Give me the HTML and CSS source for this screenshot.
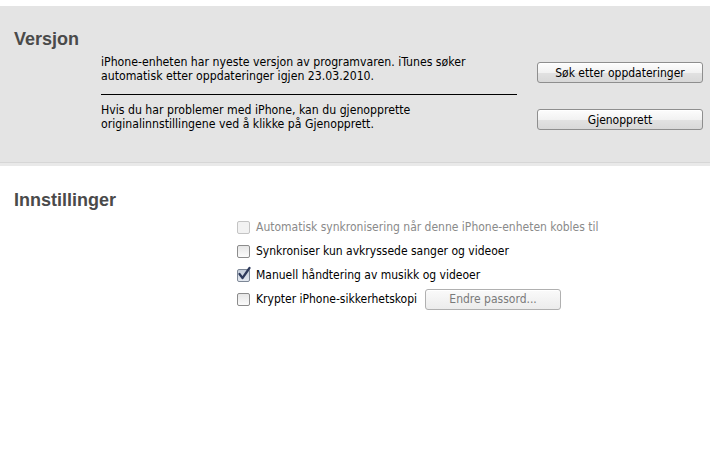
FILE: index.html
```html
<!DOCTYPE html>
<html lang="no">
<head>
    <meta charset="UTF-8">
    <title>iPhone - Sammendrag</title>
    <link rel="stylesheet" href="styles.css">
</head>
<body>
    <div class="panel">
        <h2 class="section-title">Versjon</h2>
        <div class="version-grid">
            <p class="info">iPhone-enheten har nyeste versjon av programvaren. iTunes søker automatisk etter oppdateringer igjen 23.03.2010.</p>
            <button class="btn btn-update">Søk etter oppdateringer</button>
            <hr class="divider">
            <p class="info">Hvis du har problemer med iPhone, kan du gjenopprette originalinnstillingene ved å klikke på Gjenopprett.</p>
            <button class="btn btn-restore">Gjenopprett</button>
        </div>
    </div>

    <div class="settings">
        <h2 class="section-title">Innstillinger</h2>
        <ul class="options">
            <li class="option disabled">
                <span class="check"></span>
                Automatisk synkronisering når denne iPhone-enheten kobles til
            </li>
            <li class="option">
                <span class="check"></span>
                Synkroniser kun avkryssede sanger og videoer
            </li>
            <li class="option">
                <span class="check checked">
                    <svg width="14" height="15" viewBox="0 0 14 15"><path d="M2.5 8 L5.5 12 L12.5 2" fill="none" stroke="#2e3a5c" stroke-width="2.2" stroke-linecap="round" stroke-linejoin="round"/></svg>
                </span>
                Manuell håndtering av musikk og videoer
            </li>
            <li class="option">
                <span class="check"></span>
                Krypter iPhone-sikkerhetskopi
                <button class="btn btn-password" disabled>Endre passord...</button>
            </li>
        </ul>
    </div>
</body>
</html>
```

FILE: styles.css
```css
body {
    margin: 0;
    background: #fff;
    color: #000;
    font-family: 'DejaVu Sans Condensed', 'DejaVu Sans', sans-serif;
    font-size: 11px;
}

.panel {
    margin-top: 6px;
    height: 160px;
    background-color: #e4e4e4;
    border-bottom: 3px solid #e9e9e9;
    box-shadow: inset 0 -4px 0 -3px #d6d6d6;
    padding-top: 23px;
    box-sizing: border-box;
}

.section-title {
    margin: 0;
    padding-left: 14px;
    font-family: 'Liberation Sans', Arial, sans-serif;
    font-size: 18px;
    line-height: 20px;
    font-weight: bold;
    color: #4a4a4a;
}

.version-grid {
    display: grid;
    grid-template-columns: 416px 166px;
    column-gap: 20px;
    margin: 6px 0 0 101px;
    align-items: start;
}

.info {
    margin: 0;
    max-width: 395px;
    font-size: 12.2px;
    line-height: 14px;
}

.divider {
    grid-column: 1;
    width: 100%;
    margin: 11px 0 8px;
    border: none;
    border-top: 1px solid #000;
}

.divider + .info {
    grid-column: 1;
}

.btn {
    font-family: inherit;
    font-size: 12px;
    color: #000;
    height: 21px;
    padding: 0 8px;
    border: 1px solid #8e8e8e;
    border-radius: 3px;
    background: linear-gradient(#fdfdfd, #f2f2f2 50%, #e2e2e2 51%, #d8d8d8);
    box-shadow: inset 0 1px 0 #fff;
}

.btn-update {
    margin-top: 7px;
}

.btn-restore {
    grid-column: 2;
    margin-top: 6px;
}

.settings {
    padding-top: 24px;
}

.options {
    list-style: none;
    margin: 5px 0 0 237px;
    padding: 0;
}

.option {
    display: flex;
    align-items: center;
    height: 24px;
    font-size: 12px;
    white-space: nowrap;
}

.option.disabled {
    color: #8a8a8a;
}

.check {
    width: 11px;
    height: 11px;
    margin-right: 6px;
    border: 1px solid #8c8c8c;
    border-radius: 2px;
    background: linear-gradient(#e6e6e6, #fbfbfb);
    position: relative;
    flex-shrink: 0;
}

.disabled .check {
    border-color: #c4c4c4;
    background: #f2f2f2;
}

.check.checked {
    border-color: #7d8796;
    background: linear-gradient(#c4cdda, #e4e9f0);
}

.check svg {
    position: absolute;
    left: -1px;
    top: -4px;
}

.btn-password {
    width: 136px;
    margin-left: 8px;
    color: #7a7a7a;
    border-color: #b0b0b0;
    background: linear-gradient(#fafafa, #ececec);
}
```
